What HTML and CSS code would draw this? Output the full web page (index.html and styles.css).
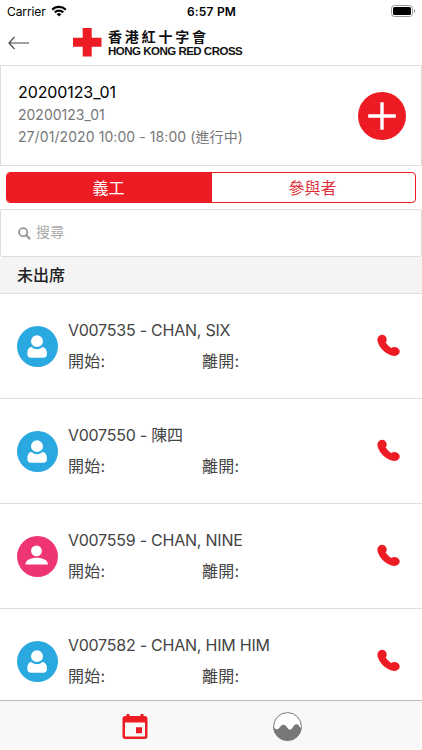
FILE: index.html
```
<!DOCTYPE html>
<html lang="zh-Hant">
<head>
<meta charset="utf-8">
<title>香港紅十字會</title>
<link rel="stylesheet" href="styles.css">
</head>
<body>
<svg width="0" height="0" class="defs">
  <symbol id="phone" viewBox="0 0 24 24"><path d="M2.200 2C4.200.1 7.800.500 9.300 3c1.300 2.200 1 4.100-.2 5.900 1.500 2.400 3.300 4.200 5.700 5.800 1.900-1.500 4.600-1.600 6.700-.1 2.500 1.800 2.900 4.200 1.200 6.200-1.600 1.900-4.600 2.600-7.500 1.600C8.200 20 2.400 14.500.6 7.500.1 5.300.6 3.500 2.200 2z"/></symbol>
  <symbol id="bust" viewBox="0 0 40 40"><circle cx="19.500" cy="14.800" r="5.800"/><path d="M14.300 20.500c3 2.900 7.400 2.900 10.400 0 3 .3 4.500 2.700 4.500 6.500 0 2.700-1.200 4-3.500 4H13.600c-2.300 0-3.500-1.300-3.500-4 0-3.800 1.200-6.200 4.200-6.500z"/></symbol>
  <symbol id="member" viewBox="0 0 40 40"><circle cx="19" cy="14.500" r="5.300"/><path d="M8.200 27.800c0-4.500 5.500-6.600 11-6.600s11 2.100 11 6.600z"/></symbol>
</svg>
<div class="screen">
  <div class="status">
    <div class="carrier"><span>Carrier</span>
      <svg width="16" height="12" viewBox="0 0 16 12"><g fill="none" stroke="#000" stroke-width="2.200"><path d="M1.200 4.700a9.700 9.700 0 0 1 13.600 0"/><path d="M3.800 7.400a6 6 0 0 1 8.400 0"/></g><path d="M5.700 9.200a3.300 3.300 0 0 1 4.600 0L8 11.600z"/></svg>
    </div>
    <div class="time">6:57 PM</div>
    <svg class="battery" width="25" height="12" viewBox="0 0 25 12"><rect x=".5" y=".5" width="21" height="11" rx="3" fill="#fff" stroke="#999"/><rect x="2" y="2" width="18" height="8" rx="1.500"/><path d="M23 4v4c1.700-.6 1.700-3.400 0-4z" fill="#999"/></svg>
  </div>
  <header class="header">
    <svg class="back" width="22" height="14" viewBox="0 0 22 14"><path d="M6.500 1 .9 7l5.600 6M1 7h20" fill="none" stroke="#444" stroke-width="1.100"/></svg>
    <svg class="cross" width="29" height="29" viewBox="0 0 29 29"><path d="M9.700 0h9v9.700H28.500v9H18.700V28.500h-9V18.700H0v-9H9.700z" fill="#ed1c24"/></svg>
    <div class="brand"><div class="brand-zh">香港紅十字會</div><div class="brand-en">HONG KONG RED CROSS</div></div>
  </header>
  <section class="event">
    <div>
      <div class="event-title">20200123_01</div>
      <div class="event-sub">20200123_01</div>
      <div class="event-date">27/01/2020 10:00 - 18:00 (進行中)</div>
    </div>
    <svg class="add" width="48" height="48" viewBox="0 0 48 48"><circle cx="24" cy="24" r="24" fill="#ed1c24"/><path d="M10.200 24h27.600M24 10.200v27.600" stroke="#fff" stroke-width="3.400"/></svg>
  </section>
  <div class="segments"><div class="segment active">義工</div><div class="segment">參與者</div></div>
  <div class="search">
    <svg width="13" height="13" viewBox="0 0 13 13"><g fill="none" stroke="#999"><circle cx="5.200" cy="5.200" r="4.100" stroke-width="1.900"/><path d="m8.200 8.200 3.300 3.300" stroke-width="2.300" stroke-linecap="round"/></g></svg>
    <span>搜尋</span>
  </div>
  <div class="group">未出席</div>
  <main class="list">
    <div class="row"><svg class="avatar"><use href="#bust"/></svg><div class="info"><div class="name">V007535 - CHAN, SIX</div><div class="times"><span>開始:</span><span>離開:</span></div></div><svg class="phone"><use href="#phone"/></svg></div>
    <div class="row"><svg class="avatar"><use href="#bust"/></svg><div class="info"><div class="name">V007550 - 陳四</div><div class="times"><span>開始:</span><span>離開:</span></div></div><svg class="phone"><use href="#phone"/></svg></div>
    <div class="row"><svg class="avatar pink"><use href="#member"/></svg><div class="info"><div class="name">V007559 - CHAN, NINE</div><div class="times"><span>開始:</span><span>離開:</span></div></div><svg class="phone"><use href="#phone"/></svg></div>
    <div class="row"><svg class="avatar"><use href="#bust"/></svg><div class="info"><div class="name">V007582 - CHAN, HIM HIM</div><div class="times"><span>開始:</span><span>離開:</span></div></div><svg class="phone"><use href="#phone"/></svg></div>
  </main>
  <nav class="tabs">
    <svg class="calendar" width="26" height="26" viewBox="0 0 26 26"><path fill="#ed1c24" fill-rule="evenodd" d="M4.500 0h3v2h11V0h3v2h1.300a2.700 2.700 0 0 1 2.700 2.700v17.600a2.700 2.700 0 0 1-2.700 2.700H3.200a2.700 2.700 0 0 1-2.700-2.700V4.700A2.700 2.700 0 0 1 3.200 2h1.300zM3 8.400v14.100h20V8.400zM14 13.300h6v6h-6z"/></svg>
    <svg class="wave" width="29" height="29" viewBox="0 0 29 29"><circle cx="14.500" cy="14.500" r="13.900" fill="#fff" stroke="#777" stroke-width="1"/><path d="M.5 14.500c1 2.500 3.800 4 5.700 1.400 2-3.400 5.400-4.800 7.800-.6 1.900 3.500 4.200 2.900 6-.2 2.200-3.600 4.800-3.600 6.600-.3.600 1 1.200 1.200 1.900.4A14 14 0 0 1 .5 14.500z" fill="#777"/></svg>
  </nav>
</div>
</body>
</html>
```
FILE: styles.css
```
* { box-sizing: border-box; }
body { margin: 0; background: #fff; font-family: Inter, "Noto Sans CJK TC", sans-serif; color: #444; }
svg { display: block; flex: none; }
.defs { position: absolute; }
.screen { width: 422px; height: 750px; display: flex; flex-direction: column; overflow: hidden; white-space: nowrap; }
.status { height: 22px; flex: none; display: grid; grid-template-columns: 1fr auto 1fr; align-items: center; padding: 0 6px 0 7px; color: #000; font-size: 12px; }
.carrier { display: flex; align-items: center; gap: 5px; letter-spacing: -.1px; }
.time { font-weight: 600; letter-spacing: .2px; }
.battery { justify-self: end; }
.header { height: 43px; flex: none; display: flex; align-items: flex-start; padding-left: 8px; color: #111; }
.back { margin-top: 14px; }
.cross { margin: 6px 0 0 43px; }
.brand { margin: 4px 0 0 6px; }
.brand-zh { height: 18px; font: 700 14px/20px "Noto Sans CJK TC", sans-serif; letter-spacing: 2.800px; }
.brand-en { font: 700 11.500px/13px "Liberation Sans", sans-serif; letter-spacing: -.5px; margin-top: 1px; }
.event { height: 101px; flex: none; display: flex; justify-content: space-between; align-items: flex-start; border: 1px solid #ddd; padding: 15px 15px 0 17px; }
.event-title { color: #000; font-size: 16px; line-height: 23px; letter-spacing: -.1px; }
.event-sub { color: #777; font-size: 14px; line-height: 22px; }
.event-date { color: #777; font-size: 14px; line-height: 22px; letter-spacing: .08px; }
.add { margin-top: 11px; }
.segments { height: 31px; flex: none; margin: 6px 6px 6px; display: grid; grid-template-columns: 205px 1fr; border: 1px solid #ed1c24; border-radius: 4px; overflow: hidden; }
.segment { display: flex; justify-content: center; align-items: center; color: #dd3038; font-size: 16px; line-height: 29px; padding-right: 2px; }
.active { background: #ed1c24; color: #fff; }
.segment { padding-top: 1px; }
.search { height: 48px; flex: none; display: flex; align-items: center; gap: 5px; border: 1px solid #ddd; border-radius: 2px; padding-left: 17px; color: #aaa; font-size: 14px; line-height: 20px; }
.search span { margin-top: -3px; }
.group { height: 37px; flex: none; padding-left: 17px; background: #f4f4f4; border-bottom: 1px solid #ddd; color: #222; font-size: 16px; font-weight: 500; line-height: 36px; }
.list { height: 406px; flex: none; overflow: hidden; }
.row { height: 105px; display: flex; align-items: flex-start; border-bottom: 1px solid #ddd; }
.avatar { width: 41px; height: 41px; margin: 32px 0 0 16.500px; border-radius: 50%; background: #2aa9e0; fill: #fff; }
.pink { background: #ee3572; }
.info { flex: 1; margin: 21px 0 0 10.500px; font-size: 16px; }
.name { height: 31px; line-height: 31px; letter-spacing: -.23px; }
.times { display: grid; grid-template-columns: 134px 1fr; line-height: 30px; letter-spacing: .2px; }
.phone { width: 23px; height: 23px; margin: 40px 22px 0 0; fill: #ed1c24; }
.tabs { height: 50px; flex: none; display: flex; align-items: flex-start; background: #f8f8f8; border-top: 1px solid #bbb; }
.calendar { margin: 13px 0 0 122px; }
.wave { margin: 11px 0 0 125px; }
```
